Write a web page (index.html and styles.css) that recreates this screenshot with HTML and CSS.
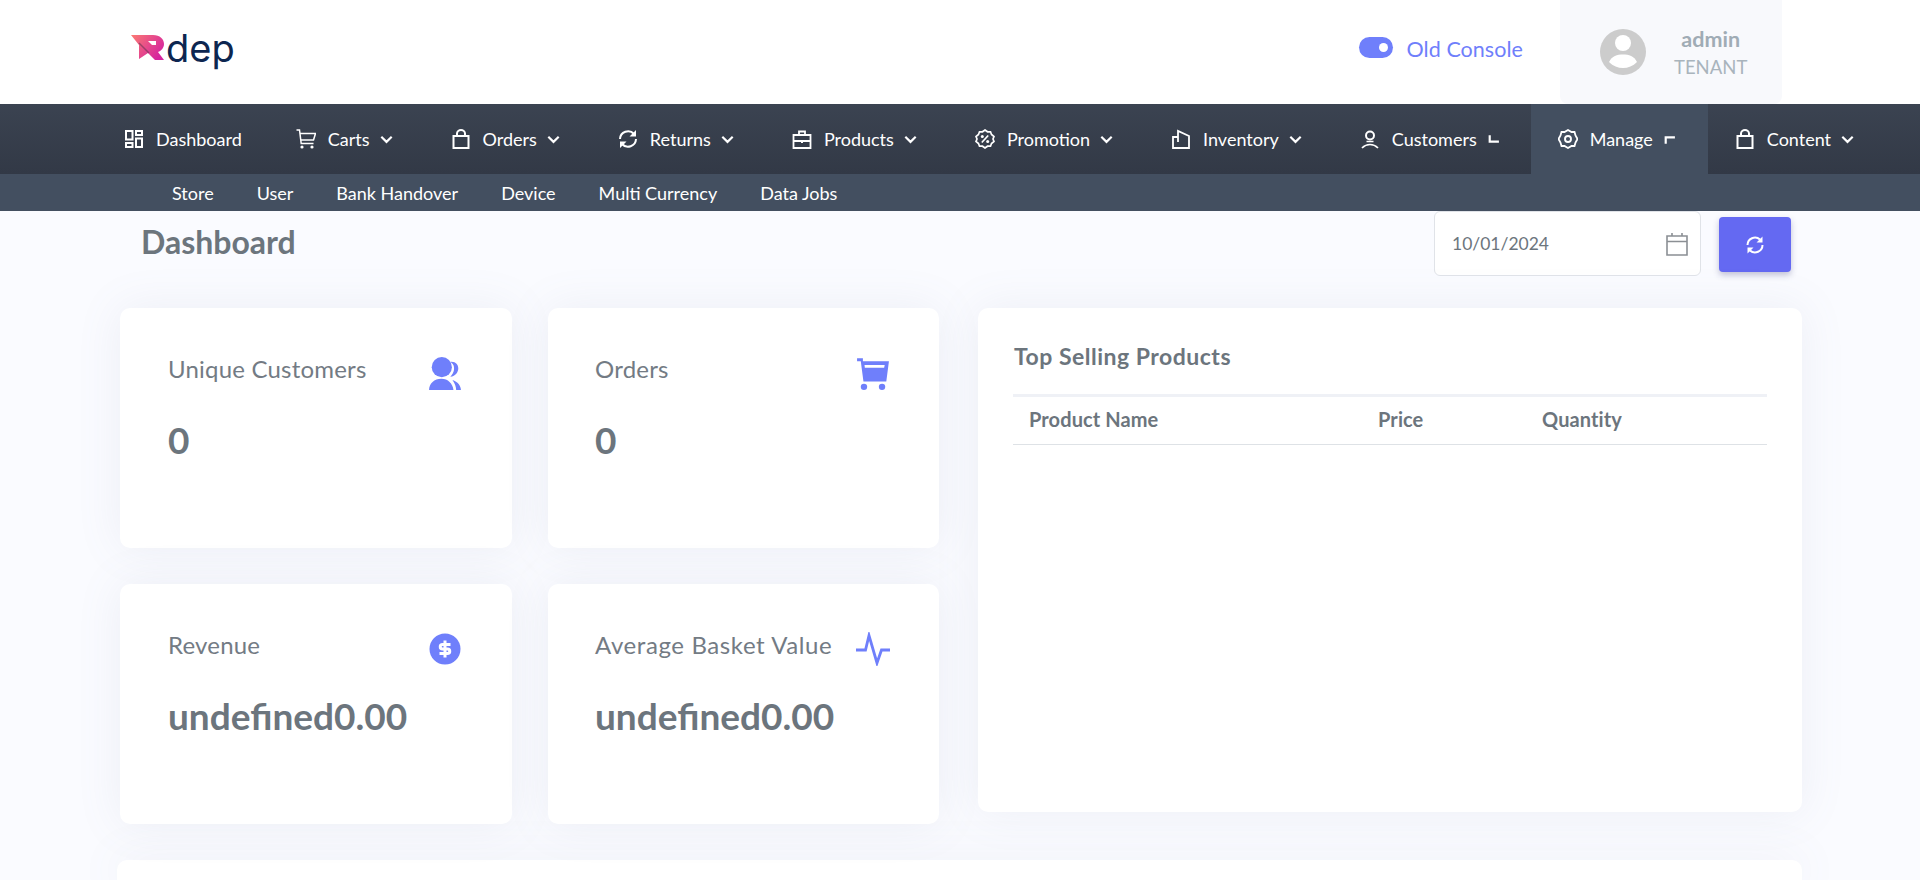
FILE: index.html
```html
<!DOCTYPE html>
<html lang="en">
<head>
<meta charset="utf-8">
<title>Dashboard</title>
<link rel="stylesheet" href="styles.css">
</head>
<body>
<header class="topbar">
  <div class="logo">
    <svg class="logo-mark" width="34" height="28" viewBox="0 0 34 28">
      <defs><linearGradient id="lg" x1="0" y1="0" x2="1" y2="0.6"><stop offset="0" stop-color="#fb7a72"/><stop offset="1" stop-color="#d6259e"/></linearGradient></defs>
      <path d="M0 1H22C29 1 33 5 33 10C33 14 30 17 27 18L33 26H24L17 19L8 25V11Z" fill="url(#lg)"/>
      <path d="M8 9L18 19" stroke="#7d3a5c" stroke-width="1.5" opacity=".7"/>
      <path d="M17 7H25V11H21Z" fill="#fff"/>
    </svg>
    <span class="logo-text">dep</span>
  </div>
  <div class="top-right">
    <span class="toggle"><span class="toggle-dot"></span></span>
    <span class="console">Old Console</span>
    <div class="user">
      <svg class="avatar" width="46" height="46" viewBox="0 0 46 46"><circle cx="23" cy="23" r="23" fill="#ccc"/><circle cx="23" cy="14" r="8" fill="#fff"/><path d="M9 33C12 27 17 25.500 23 25.500S34 27 37 33C33 37 28 39 23 39S13 37 9 33Z" fill="#fff"/></svg>
      <div class="user-text"><div class="user-name">admin</div><div class="user-role">TENANT</div></div>
    </div>
  </div>
</header>

<nav class="nav">
  <a class="nav-item nav-first">
    <svg class="ico" viewBox="0 0 20 20"><path d="M2 2h6.500v8.500H2zM12 2h6v4h-6zM2 14h6.500v4H2zM12 9.500h6V18h-6z" fill="none" stroke="#fff" stroke-width="2"/></svg>
    <span>Dashboard</span>
  </a>
  <a class="nav-item">
    <svg class="ico" viewBox="0 0 20 20"><path d="M.5 1H3.500L5.200 14.500H17.500M4 4.500H19.500L17.500 11H5" fill="none" stroke="#fff" stroke-width="1.500"/><circle cx="6" cy="18" r="1.600" fill="#fff"/><circle cx="16" cy="18" r="1.600" fill="#fff"/></svg>
    <span>Carts</span>
    <svg class="chev" viewBox="0 0 12 8"><path d="M1.200 1.500L6 6.200L10.800 1.500" fill="none" stroke="#fff" stroke-width="2"/></svg>
  </a>
  <a class="nav-item">
    <svg class="ico" viewBox="0 0 20 20"><path d="M2.500 7H17.500V19H2.500zM6 7V4.500C6 2.500 8 1 10 1S14 2.500 14 4.500V7" fill="none" stroke="#fff" stroke-width="2"/></svg>
    <span>Orders</span>
    <svg class="chev" viewBox="0 0 12 8"><path d="M1.200 1.500L6 6.200L10.800 1.500" fill="none" stroke="#fff" stroke-width="2"/></svg>
  </a>
  <a class="nav-item">
    <svg class="ico" viewBox="0 0 20 20"><path d="M2 10A8 8 0 0 1 16 5M18 10A8 8 0 0 1 4 15" fill="none" stroke="#fff" stroke-width="2"/><path d="M18 1V7.500H11.500zM2 19V12.500H8.500z" fill="#fff"/></svg>
    <span>Returns</span>
    <svg class="chev" viewBox="0 0 12 8"><path d="M1.200 1.500L6 6.200L10.800 1.500" fill="none" stroke="#fff" stroke-width="2"/></svg>
  </a>
  <a class="nav-item">
    <svg class="ico" viewBox="0 0 20 20"><path d="M1.500 6H18.500V19H1.500zM7 6V2.500H13V6M1.500 12H18.500" fill="none" stroke="#fff" stroke-width="1.800"/><path d="M9 11h2v3H9z" fill="#fff"/></svg>
    <span>Products</span>
    <svg class="chev" viewBox="0 0 12 8"><path d="M1.200 1.500L6 6.200L10.800 1.500" fill="none" stroke="#fff" stroke-width="2"/></svg>
  </a>
  <a class="nav-item">
    <svg class="ico" viewBox="0 0 20 20"><path d="M10 1L12.500 2.800L15.500 2.800L16.500 5.500L19 7.500L18 10L19 12.500L16.500 14.500L15.500 17.200L12.500 17.200L10 19L7.500 17.200L4.500 17.200L3.500 14.500L1 12.500L2 10L1 7.500L3.500 5.500L4.500 2.800L7.500 2.800Z" fill="none" stroke="#fff" stroke-width="1.700"/><path d="M6.800 13.500L13.200 6.500" stroke="#fff" stroke-width="1.700"/><circle cx="7.300" cy="7.500" r="1.500" fill="#fff"/><circle cx="12.700" cy="12.500" r="1.500" fill="#fff"/></svg>
    <span>Promotion</span>
    <svg class="chev" viewBox="0 0 12 8"><path d="M1.200 1.500L6 6.200L10.800 1.500" fill="none" stroke="#fff" stroke-width="2"/></svg>
  </a>
  <a class="nav-item">
    <svg class="ico" viewBox="0 0 20 20"><path d="M2 8H7V2L18 7V19H2zM7 8V13" fill="none" stroke="#fff" stroke-width="1.800"/></svg>
    <span>Inventory</span>
    <svg class="chev" viewBox="0 0 12 8"><path d="M1.200 1.500L6 6.200L10.800 1.500" fill="none" stroke="#fff" stroke-width="2"/></svg>
  </a>
  <a class="nav-item">
    <svg class="ico" viewBox="0 0 20 20"><circle cx="10" cy="6.500" r="4" fill="none" stroke="#fff" stroke-width="2"/><path d="M6.500 12.500H13.500M2 19C4.500 16.500 7 15.500 10 15.500S15.500 16.500 18 19" fill="none" stroke="#fff" stroke-width="1.700"/></svg>
    <span>Customers</span>
    <svg class="chev" viewBox="0 0 12 8"><path d="M2.500 0V6H11" fill="none" stroke="#fff" stroke-width="2"/></svg>
  </a>
  <a class="nav-item nav-active">
    <svg class="ico" viewBox="0 0 20 20"><path d="M10 1L13.500 3H16.500L17.500 6.500L19.500 10L17.500 13.500L16.500 17H13.500L10 19L6.500 17H3.500L2.500 13.500L.5 10L2.500 6.500L3.500 3H6.500Z" fill="none" stroke="#fff" stroke-width="1.800"/><circle cx="10" cy="10" r="3" fill="none" stroke="#fff" stroke-width="1.900"/></svg>
    <span>Manage</span>
    <svg class="chev" viewBox="0 0 12 8"><path d="M2.500 8V2H11" fill="none" stroke="#fff" stroke-width="2"/></svg>
  </a>
  <a class="nav-item">
    <svg class="ico" viewBox="0 0 20 20"><path d="M2.500 7H17.500V19H2.500zM6 7V4.500C6 2.500 8 1 10 1S14 2.500 14 4.500V7" fill="none" stroke="#fff" stroke-width="2"/></svg>
    <span>Content</span>
    <svg class="chev" viewBox="0 0 12 8"><path d="M1.200 1.500L6 6.200L10.800 1.500" fill="none" stroke="#fff" stroke-width="2"/></svg>
  </a>
</nav>

<div class="subnav">
  <a>Store</a><a>User</a><a>Bank Handover</a><a>Device</a><a>Multi Currency</a><a>Data Jobs</a>
</div>

<main class="page">
  <div class="title-row">
    <h1 class="page-title">Dashboard</h1>
    <div class="date-input">
      <span>10/01/2024</span>
      <svg width="24" height="24" viewBox="0 0 24 24"><path d="M2 4H22V23H2zM2 9.500H22M7 1V4M17 1V4" fill="none" stroke="#8b8f94" stroke-width="1.600"/></svg>
    </div>
    <button class="refresh">
      <svg width="20" height="20" viewBox="0 0 20 20"><path d="M2.500 10A7.500 7.500 0 0 1 15 4.500M17.500 10A7.500 7.500 0 0 1 5 15.500" fill="none" stroke="#fff" stroke-width="2"/><path d="M17.500 1.500V7.500H11.500zM2.500 18.500V12.500H8.500z" fill="#fff"/></svg>
    </button>
  </div>

  <div class="row">
    <div class="stats">
      <section class="card stat">
        <div class="stat-head"><span class="stat-label">Unique Customers</span>
          <svg width="34" height="34" viewBox="-1 -1 32 32"><circle cx="12" cy="9.500" r="9.500" fill="#6f7ffb"/><path d="M20 4.500C25 4 27.500 7 27.500 10.500S25 18 20 18.500C23 15 23.500 13 23.500 10.500S23 7 20 4.500Z" fill="#6f7ffb"/><path d="M0 31C0 25 5 20.500 11.500 20.500S22 25 23 31Z" fill="#6f7ffb"/><path d="M22 21.500C27 23 30 27 30 31H25.500C25.500 28 24.500 25 22 21.500Z" fill="#6f7ffb"/></svg>
        </div>
        <div class="stat-value">0</div>
      </section>
      <section class="card stat">
        <div class="stat-head"><span class="stat-label">Orders</span>
          <svg class="icon-cart" width="34" height="34" viewBox="-1 -1 32 32"><path d="M0 1H5.500V4H30L27.500 23H6L3.500 4H0Z" fill="#6f7ffb"/><path d="M7 7.500H26L25.500 10H7.300Z" fill="#fff"/><circle cx="6.500" cy="28" r="3" fill="#6f7ffb"/><circle cx="23.500" cy="28" r="3" fill="#6f7ffb"/></svg>
        </div>
        <div class="stat-value">0</div>
      </section>
      <section class="card stat">
        <div class="stat-head"><span class="stat-label">Revenue</span>
          <svg width="34" height="34" viewBox="0 0 34 34"><circle cx="17" cy="17" r="15.500" fill="#6f7ffb"/><path d="M22.500 12.500H14.500A2.200 2.200 0 0 0 14.500 17H19.500A2.200 2.200 0 0 1 19.500 21.500H11.500M17 8.500V25.500" fill="none" stroke="#fff" stroke-width="3"/></svg>
        </div>
        <div class="stat-value">undefined0.00</div>
      </section>
      <section class="card stat">
        <div class="stat-head"><span class="stat-label">Average Basket Value</span>
          <svg class="icon-pulse" width="36" height="34" viewBox="0 0 36 34"><path d="M1 18H10.500L14 3.500L22 31L26.500 18H35" fill="none" stroke="#6f7ffb" stroke-width="2.800"/></svg>
        </div>
        <div class="stat-value">undefined0.00</div>
      </section>
    </div>

    <section class="card top-card">
      <h2 class="top-title">Top Selling Products</h2>
      <div class="table-head">
        <span class="col-name">Product Name</span><span class="col-price">Price</span><span class="col-qty">Quantity</span>
      </div>
    </section>
  </div>

  <section class="card bottom-card"></section>
</main>
</body>
</html>
```

FILE: styles.css
```css
* { box-sizing: border-box; }
html, body { margin: 0; height: 880px; overflow: hidden; }
body { font-family: "Lato", "Noto Sans", sans-serif; background: #fafbff; color: #6c757d; }

.topbar { height: 104px; background: #fff; display: flex; justify-content: space-between; padding: 0 138px 0 131px; }
.logo { display: flex; align-items: center; gap: 1px; height: 100px; }
.logo-mark { margin-top: -5px; }
.logo-text { font-family: "Inter", sans-serif; font-size: 38px; font-weight: 400; color: #0d2650; line-height: 1; margin-top: -5px; }
.top-right { display: flex; align-items: center; }
.toggle { width: 34px; height: 21px; border-radius: 11px; background: #6f7ffb; position: relative; margin-right: 14px; margin-top: -10px; }
.toggle-dot { position: absolute; right: 5px; top: 6px; width: 9px; height: 9px; border-radius: 50%; background: #fff; }
.console { font-size: 21.5px; letter-spacing: .05px; color: #6f7ffb; margin-right: 37px; margin-top: -7px; }
.user { width: 222px; height: 104px; background: #f8f9fc; border-radius: 0 0 8px 8px; display: flex; align-items: center; padding-left: 40px; gap: 28px; }
.user-text { text-align: center; padding-top: 5px; }
.user-name { font-size: 21.5px; font-weight: 700; color: #a0acb5; line-height: 26px; }
.user-role { font-size: 18.5px; color: #a9b4bc; line-height: 31px; font-weight: 400; }

.nav { height: 70px; background: linear-gradient(#3b4351, #323946); display: flex; padding-left: 97px; }
.nav-item { display: flex; align-items: center; height: 70px; padding: 0 31px 0 27px; color: #fff; font-size: 18px; font-weight: 400; gap: 12px; }
.nav-first { padding-right: 27px; }
.nav-active { background: #434f60; padding-right: 32px; }
.ico { width: 20px; height: 20px; flex: none; }
.chev { width: 13px; height: 9px; flex: none; margin-left: -2px; }

.subnav { height: 37px; background: #434f60; display: flex; align-items: center; gap: 43px; padding-left: 172px; color: #fff; font-size: 18px; font-weight: 400; position: relative; z-index: 1; }

.page { padding: 0 118px 0 120px; }
.title-row { display: flex; align-items: flex-start; height: 96px; }
.page-title { margin: 13px auto 0 21px; font-size: 32px; font-weight: 700; line-height: 36px; color: #6c757d; }
.date-input { width: 267px; height: 65px; background: #fff; border: 1px solid #e0e3e8; border-radius: 6px; display: flex; align-items: center; justify-content: space-between; padding: 0 11px 0 17px; font-size: 17.500px; color: #6c757d; margin-right: 18px; }
.refresh { width: 72px; height: 55px; margin-top: 6px; margin-right: 11px; border: 0; border-radius: 4px; background: #6469f2; box-shadow: 0 3px 6px rgba(60, 60, 120, .3); display: flex; align-items: center; justify-content: center; }

.row { display: flex; align-items: flex-start; margin-top: 1px; }
.stats { display: grid; grid-template-columns: 392px 391px; grid-auto-rows: 240px; gap: 36px; }
.card { background: #fff; border-radius: 10px; box-shadow: 0 0 45px rgba(120, 125, 160, .1); }
.stat { padding: 48px 48px; }
.stat:nth-child(even) { padding-left: 47px; }
.stat-head { display: flex; align-items: center; justify-content: space-between; height: 34px; padding-right: 2px; }
.stat-label { font-size: 24px; font-weight: 400; letter-spacing: .2px; color: #737b84; margin-bottom: 9px; }
.stat:last-child .stat-label { letter-spacing: .6px; }
.icon-cart { margin-right: -1px; }
.icon-pulse { margin-right: -2px; }
.stat-value { margin-top: 26px; font-size: 37px; font-weight: 700; line-height: 48px; color: #6c757d; }

.top-card { width: 824px; height: 504px; margin-left: 39px; padding: 34px 35px; }
.top-title { margin: 0 0 24px; padding-left: 1px; font-size: 23px; letter-spacing: .5px; font-weight: 700; line-height: 28px; color: #6c757d; }
.table-head { display: flex; height: 51px; border-top: 3px solid #eff1f6; border-bottom: 1px solid #dee2e6; align-items: center; padding: 0 0 3px 16px; font-size: 20px; letter-spacing: .1px; font-weight: 700; color: #6c757d; }
.col-name { width: 349px; }
.col-price { width: 164px; }

.bottom-card { margin: 36px 0 0 -3px; height: 20px; border-radius: 10px 10px 0 0; }
```
